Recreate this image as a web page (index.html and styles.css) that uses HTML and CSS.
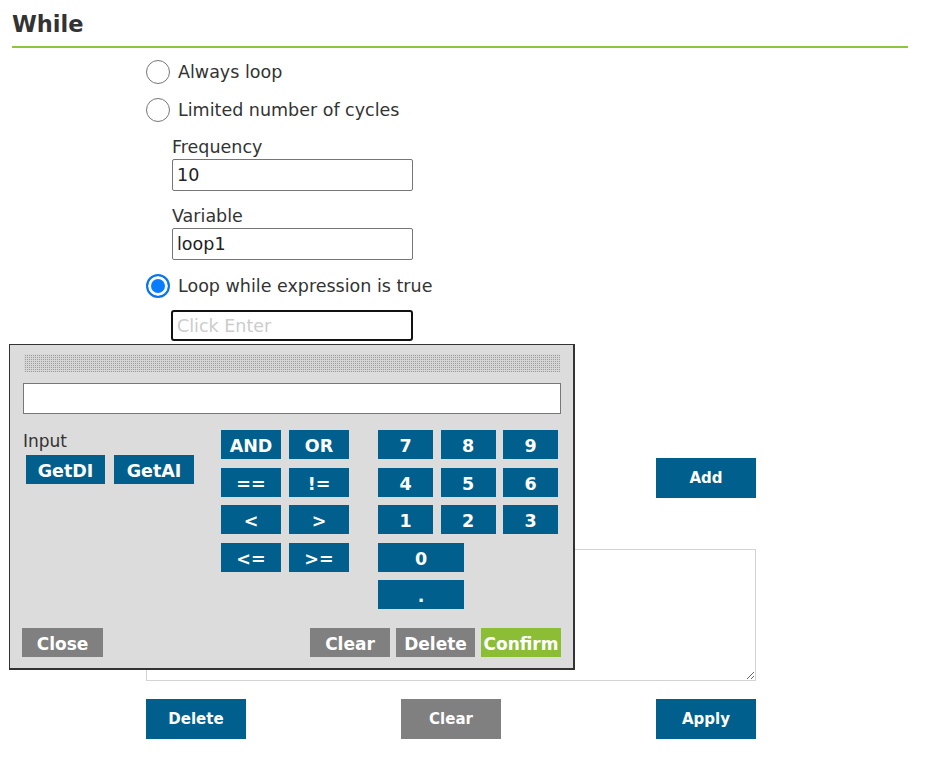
FILE: index.html
```html
<!DOCTYPE html>
<html lang="en">
<head>
<meta charset="utf-8">
<title>While</title>
<link rel="stylesheet" href="styles.css">
</head>
<body>
<div class="page">
  <h1 class="title">While</h1>
  <div class="form">
    <label class="radio-row"><input type="radio" name="mode" class="radio"><span>Always loop</span></label>
    <label class="radio-row second"><input type="radio" name="mode" class="radio"><span>Limited number of cycles</span></label>
    <div class="field">
      <div class="field-label">Frequency</div>
      <input class="text" type="text" value="10">
    </div>
    <div class="field">
      <div class="field-label">Variable</div>
      <input class="text" type="text" value="loop1">
    </div>
    <label class="radio-row third"><input type="radio" name="mode" class="radio" checked><span>Loop while expression is true</span></label>
    <div class="expr-wrap">
      <input class="text expr" type="text" placeholder="Click Enter">
    </div>
    <div class="add-row"><button class="btn blue">Add</button></div>
    <textarea class="list"></textarea>
    <div class="actions">
      <button class="btn blue">Delete</button>
      <button class="btn grey">Clear</button>
      <button class="btn blue">Apply</button>
    </div>
  </div>

  <div class="keypad">
    <div class="handle"></div>
    <input class="kp-input" type="text">
    <div class="kp-body">
      <div class="kp-left">
        <div class="kp-label">Input</div>
        <div class="kp-inputs">
          <button class="key w79">GetDI</button>
          <button class="key w80">GetAI</button>
        </div>
      </div>
      <div class="kp-ops">
        <button class="key">AND</button>
        <button class="key">OR</button>
        <button class="key">==</button>
        <button class="key">!=</button>
        <button class="key">&lt;</button>
        <button class="key">&gt;</button>
        <button class="key">&lt;=</button>
        <button class="key">&gt;=</button>
      </div>
      <div class="kp-nums">
        <button class="key">7</button>
        <button class="key">8</button>
        <button class="key">9</button>
        <button class="key">4</button>
        <button class="key">5</button>
        <button class="key">6</button>
        <button class="key">1</button>
        <button class="key">2</button>
        <button class="key">3</button>
        <button class="key wide">0</button>
        <button class="key wide">.</button>
      </div>
    </div>
    <div class="kp-foot">
      <button class="key key-grey w81">Close</button>
      <div class="kp-foot-right">
        <button class="key key-grey w80">Clear</button>
        <button class="key key-grey w79">Delete</button>
        <button class="key key-green w80">Confirm</button>
      </div>
    </div>
  </div>
</div>
</body>
</html>
```
FILE: styles.css
```css
* { box-sizing: border-box; }
html, body { margin: 0; padding: 0; background: #fff; }
body {
  font-family: "DejaVu Sans", Verdana, sans-serif;
  color: #333;
  font-size: 17.5px;
}
.page {
  position: relative;
  width: 932px;
  height: 775px;
  padding: 0 24px 0 12px;
}
.title {
  margin: 0;
  font-size: 22.5px;
  font-weight: bold;
  color: #333;
  height: 48px;
  padding-top: 9px;
  line-height: 30px;
  border-bottom: 2px solid #8cc63f;
}
.form {
  margin-left: 134px;
  width: 610px;
  display: flex;
  flex-direction: column;
}
.radio-row {
  display: flex;
  align-items: center;
  height: 24px;
  margin-top: 12px;
  gap: 8px;
  color: #333;
}
.radio-row.second { margin-top: 14px; }
.radio-row.third { margin-top: 14px; }
.radio {
  appearance: none;
  -webkit-appearance: none;
  margin: 0;
  width: 24px;
  height: 24px;
  border-radius: 50%;
  border: 1.5px solid #767676;
  background: #fff;
  flex: none;
}
.radio:checked {
  border: 2px solid #0a74f0;
  background: #0a7cff;
  box-shadow: inset 0 0 0 3px #fff;
}
.field {
  margin-left: 26px;
  margin-top: 12px;
  display: flex;
  flex-direction: column;
}
.field + .field { margin-top: 12px; }
.field-label {
  height: 26px;
  line-height: 26px;
}
.text {
  width: 241px;
  height: 32px;
  border: 1px solid #767676;
  border-radius: 2px;
  font-family: inherit;
  font-size: 17.5px;
  color: #222;
  padding: 0 4px;
  margin-top: -1px;
}
.expr-wrap { margin-left: 25px; margin-top: 13px; }
.text.expr {
  width: 242px;
  height: 31px;
  border: 2px solid #111;
  border-radius: 3px;
  padding: 0 4px;
}
.text.expr::placeholder { color: #ccc; }
.add-row {
  display: flex;
  justify-content: flex-end;
  margin-top: 117px;
}
.btn {
  width: 100px;
  height: 40px;
  border: 0;
  border-radius: 0;
  color: #fff;
  font-family: "DejaVu Sans", Verdana, sans-serif;
  font-weight: bold;
  font-size: 15px;
  padding: 0;
}
.blue { background: #005f8c; }
.grey { background: #808080; }
.list {
  margin-top: 51px;
  width: 610px;
  height: 132px;
  border: 1px solid #d3d3d3;
  resize: both;
  display: block;
}
.actions {
  margin-top: 18px;
  display: flex;
  justify-content: space-between;
}

/* keypad overlay */
.keypad {
  position: absolute;
  left: 9px;
  top: 344px;
  width: 566px;
  height: 326px;
  background: #dcdcdc;
  border: 1px solid #333;
  border-right-width: 2px;
  border-bottom-width: 2px;
  padding: 9px 12px 0 13px;
}
.handle {
  margin-left: 1px;
  width: 536px;
  height: 18px;
  background-color: #9c9c9c;
  background-image:
    linear-gradient(90deg, #d6d6d6 50%, transparent 50%),
    linear-gradient(#d6d6d6 50%, transparent 50%);
  background-size: 2px 2px, 2px 2px;
}
.kp-input {
  display: block;
  margin-top: 11px;
  width: 538px;
  height: 31px;
  border: 1px solid #777;
  background: #fff;
}
.kp-body {
  display: flex;
  margin-top: 16px;
}
.kp-left { width: 198px; }
.kp-label {
  height: 22px;
  line-height: 22px;
  font-size: 17px;
  color: #333;
}
.kp-inputs {
  display: flex;
  gap: 9px;
  margin-top: 3px;
  margin-left: 3px;
}
.key {
  height: 29px;
  border: 0;
  border-radius: 0;
  padding: 3px 0 0;
  background: #005f8c;
  color: #fff;
  font-family: "DejaVu Sans", Verdana, sans-serif;
  font-weight: bold;
  font-size: 17.5px;
  line-height: 26px;
}
.key.key-grey { background: #808080; }
.key.key-green { background: #8cbe35; }
.kp-ops {
  display: grid;
  grid-template-columns: 60px 60px;
  column-gap: 8px;
  row-gap: 8.5px;
  align-content: start;
}
.kp-nums {
  margin-left: 29px;
  display: grid;
  grid-template-columns: 55px 55px 55px;
  column-gap: 7.5px;
  row-gap: 8.5px;
  align-content: start;
}
.kp-nums .wide { grid-column: 1 / span 2; width: 86px; }
.w79 { width: 79px; }
.w80 { width: 80px; }
.w81 { width: 81px; }
.kp-foot {
  margin-top: 19px;
  display: flex;
  justify-content: space-between;
}
.kp-foot > .key { margin-left: -1px; }
.kp-foot-right { display: flex; gap: 6px; }
.kp-foot .key { font-size: 17px; }
```
